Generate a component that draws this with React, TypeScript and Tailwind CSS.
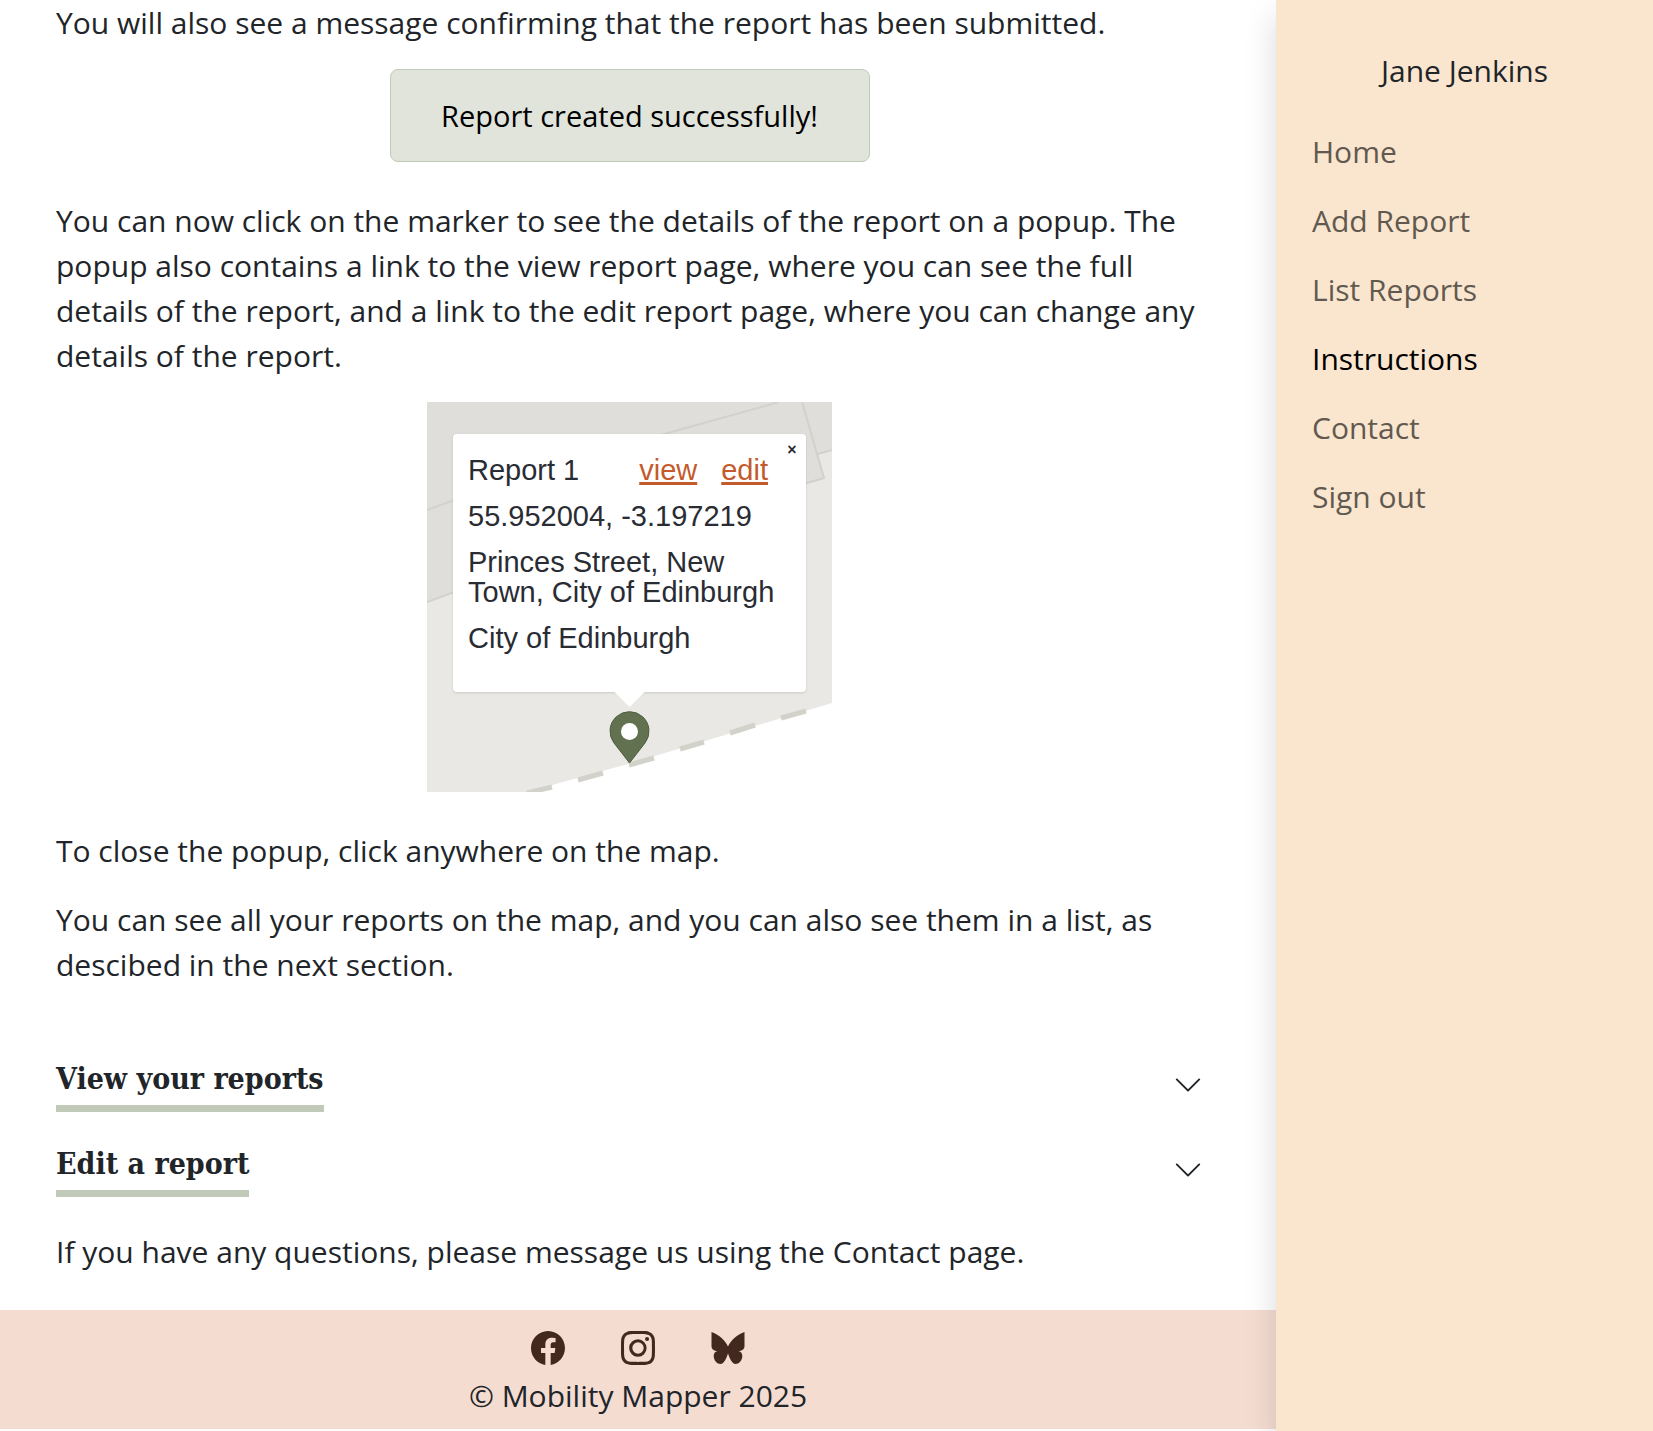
import React from "react";
import { BsChevronDown, BsFacebook, BsInstagram } from "react-icons/bs";

const navItems = ["Home", "Add Report", "List Reports", "Instructions", "Contact", "Sign out"];

function Butterfly({ className }: { className?: string }) {
  return (
    <svg viewBox="0 0 34 34" fill="currentColor" className={className} aria-hidden="true">
      <path d="M.5 1C7 3 14 9 17 15.500C20 9 27 3 33.500 1V15C33.500 18.500 31 20 27.500 20C30 20.500 31.500 22.500 31.300 25.500C31 29.500 28 33 24.500 33C21 33 18.500 27 17 22.500C15.500 27 13 33 9.500 33C6 33 3 29.500 2.700 25.500C2.500 22.500 4 20.500 6.500 20C3 20 .5 18.500 .5 15Z" />
    </svg>
  );
}

const socials = [
  { name: "Facebook", Icon: BsFacebook },
  { name: "Instagram", Icon: BsInstagram },
  { name: "Bluesky", Icon: Butterfly },
];

function MapBackground() {
  return (
    <svg viewBox="0 0 405 390" className="absolute inset-0 h-full w-full" aria-hidden="true">
      <rect width="405" height="390" fill="#e9e8e4" />
      <path d="M0 0H405V47L391 52L397 76L370 84L25 191L0 200Z" fill="#dfdedb" />
      <g fill="none" stroke="#d2d1cd" strokeWidth="2">
        <path d="M230 34L352 0" />
        <path d="M375 0L397 76L370 84" />
        <path d="M391 52L405 48" />
        <path d="M0 108L30 97" />
        <path d="M0 200L30 189" />
      </g>
      <path d="M100 390L208 360L405 301V390Z" fill="#ffffff" />
      <g stroke="#d3d2ca" strokeWidth="5">
        <path d="M100 391L125 385" />
        <path d="M151 378L176 371" />
        <path d="M202 363L227 356" />
        <path d="M253 347L277 340" />
        <path d="M303 331L328 323" />
        <path d="M354 316L379 309" />
      </g>
      <path
        d="M202.500 361L187 341A19.500 19.500 0 1 1 218 341Z"
        fill="#627150"
        stroke="#4e5c40"
        strokeWidth="1"
      />
      <circle cx="202.500" cy="329.500" r="8.500" fill="#ffffff" />
    </svg>
  );
}

function ReportPopup() {
  return (
    <div className="relative mx-auto mt-6 h-[390px] w-[405px] overflow-hidden">
      <MapBackground />
      <div className="absolute top-8 left-[26px] flex h-[258px] w-[353px] flex-col gap-4 rounded bg-white pt-[21px] pr-4 pl-[15px] font-['Liberation_Sans',Arial,sans-serif] text-[29px] leading-[30px] text-[#292c33] shadow-sm">
        <div className="flex">
          <span>Report 1</span>
          <a href="#view" className="ml-auto text-[#c45b2c] underline decoration-[3px]">
            view
          </a>
          <a href="#edit" className="mr-[22px] ml-6 text-[#c45b2c] underline decoration-[3px]">
            edit
          </a>
        </div>
        <p>55.952004, -3.197219</p>
        <p>
          Princes Street, New
          <br />
          Town, City of Edinburgh
        </p>
        <p>City of Edinburgh</p>
        <button
          type="button"
          aria-label="Close popup"
          className="absolute top-2 right-2 h-4 w-3 text-base leading-4 font-bold"
        >
          ×
        </button>
        <div className="absolute top-full left-1/2 h-[15px] w-[30px] -translate-x-1/2 bg-white [clip-path:polygon(0_0,100%_0,50%_100%)]" />
      </div>
    </div>
  );
}

function Section({ title }: { title: string }) {
  return (
    <h2>
      <button type="button" aria-expanded="false" className="flex w-full items-center justify-between text-left">
        <span className="border-b-[7px] border-[#c1cab8] pb-1 font-['DejaVu_Serif_Condensed','DejaVu_Serif',serif] text-[30px] leading-[45px] font-semibold">
          {title}
        </span>
        <BsChevronDown className="mt-0.5 size-[30px]" />
      </button>
    </h2>
  );
}

export default function App() {
  return (
    <div className="flex min-h-screen bg-white font-['Open_Sans','Noto_Sans',sans-serif] text-[30px] leading-[45px] text-[#212529]">
      <div className="flex min-w-0 flex-1 flex-col pb-0.5">
        <main className="flex-1 pr-[73px] pb-[35px] pl-14">
          <p>You will also see a message confirming that the report has been submitted.</p>
          <div
            role="status"
            className="mx-auto mt-6 w-[480px] rounded-lg border border-[#c1cab8] bg-[#e0e4db] py-[23px] text-center text-[29px] text-black"
          >
            Report created successfully!
          </div>
          <p className="mt-9">
            You can now click on the marker to see the details of the report on a popup. The popup also
            contains a link to the view report page, where you can see the full details of the report,
            and a link to the edit report page, where you can change any details of the report.
          </p>
          <ReportPopup />
          <p className="mt-9">To close the popup, click anywhere on the map.</p>
          <p className="mt-6">
            You can see all your reports on the map, and you can also see them in a list, as descibed in
            the next section.
          </p>
          <div className="mt-[69px] flex flex-col gap-[29px]">
            <Section title="View your reports" />
            <Section title="Edit a report" />
          </div>
          <p className="mt-8">
            If you have any questions, please message us using the <a href="#contact">Contact</a> page.
          </p>
        </main>
        <footer className="flex flex-col items-center gap-2 bg-[#f5dcd1] pt-[21px] pb-[11px]">
          <div className="flex gap-14 text-[#432820]">
            {socials.map(({ name, Icon }) => (
              <a key={name} href={"#" + name.toLowerCase()} aria-label={name}>
                <Icon className="size-[34px]" />
              </a>
            ))}
          </div>
          <p>© Mobility Mapper 2025</p>
        </footer>
      </div>
      <aside className="w-[377px] shrink-0 bg-[#fae6ce] px-9 pt-12 shadow-[0_15px_30px_rgba(0,0,0,0.15)]">
        <p className="text-center">Jane Jenkins</p>
        <nav className="mt-9 flex flex-col gap-6">
          {navItems.map((item) => (
            <a
              key={item}
              href={"#" + item.toLowerCase().replace(" ", "-")}
              aria-current={item === "Instructions" ? "page" : undefined}
              className={item === "Instructions" ? "text-black" : "text-[#615950]"}
            >
              {item}
            </a>
          ))}
        </nav>
      </aside>
    </div>
  );
}
